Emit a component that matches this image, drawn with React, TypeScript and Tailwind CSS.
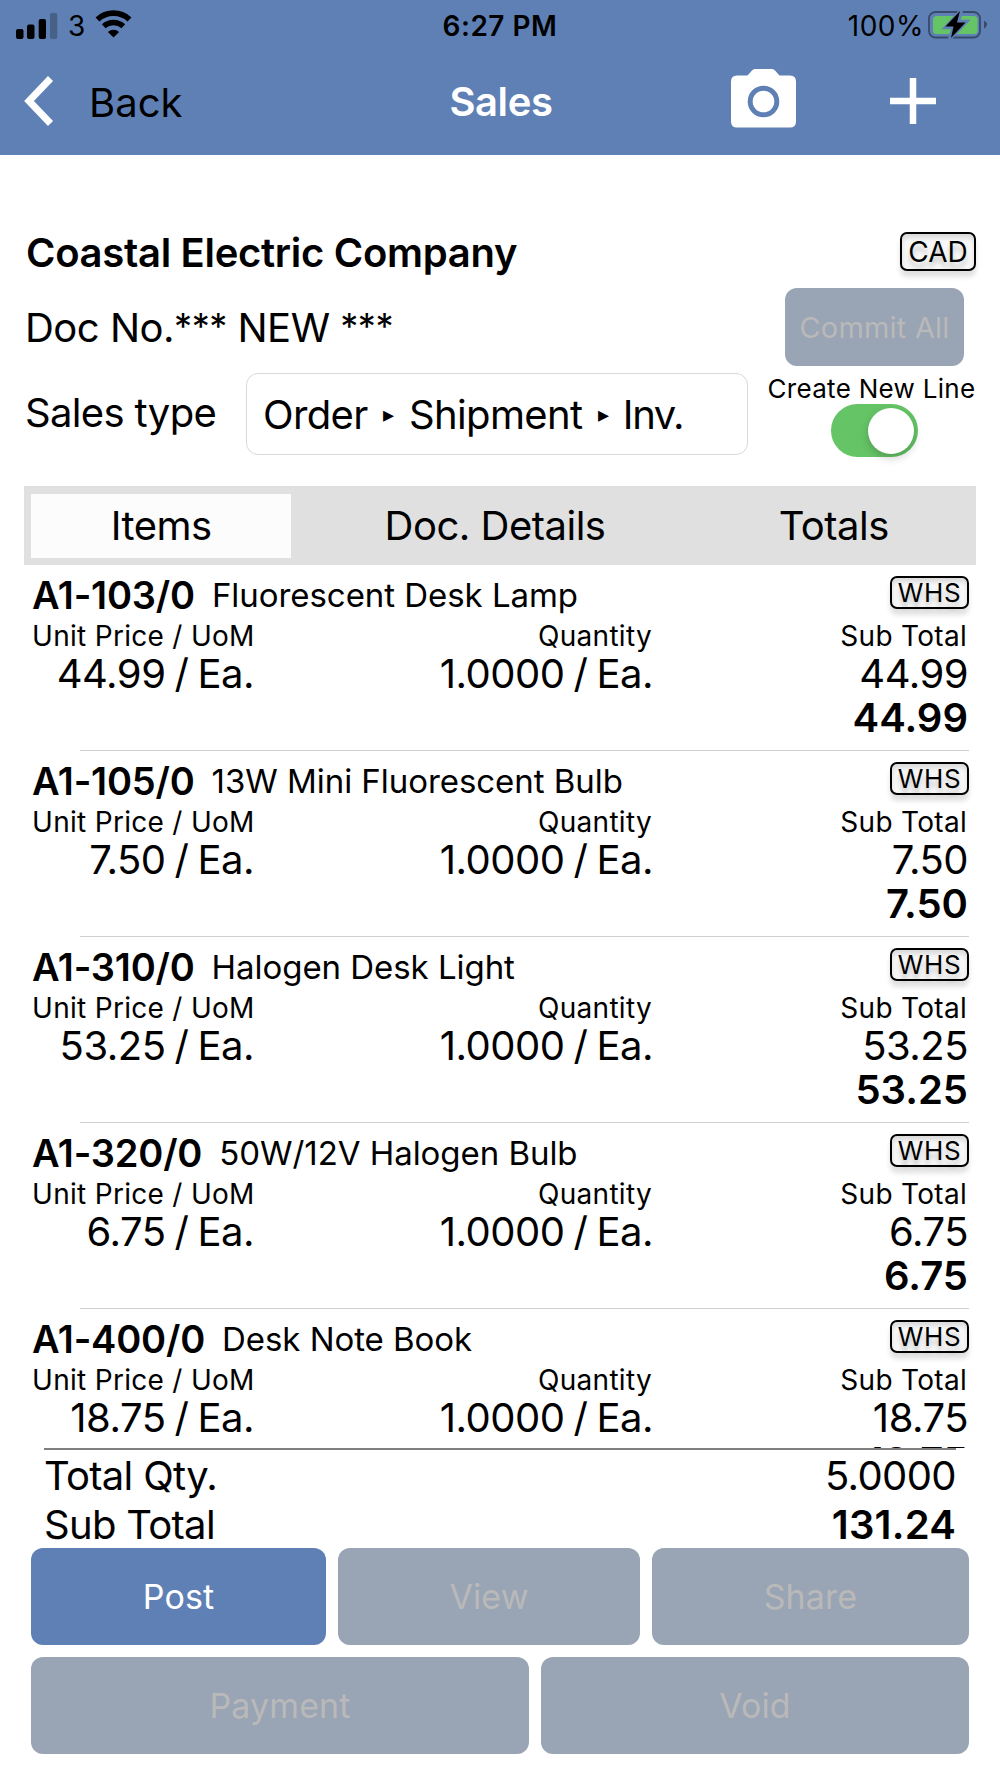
import * as React from 'react';
import clsx from 'clsx';

type SaleLine = {
  code: string;
  name: string;
  price: string;
  qty: string;
};

const lines: SaleLine[] = [
  { code: 'A1-103/0', name: 'Fluorescent Desk Lamp', price: '44.99', qty: '1.0000' },
  { code: 'A1-105/0', name: '13W Mini Fluorescent Bulb', price: '7.50', qty: '1.0000' },
  { code: 'A1-310/0', name: 'Halogen Desk Light', price: '53.25', qty: '1.0000' },
  { code: 'A1-320/0', name: '50W/12V Halogen Bulb', price: '6.75', qty: '1.0000' },
  { code: 'A1-400/0', name: 'Desk Note Book', price: '18.75', qty: '1.0000' },
];

const tabs = ['Items', 'Doc. Details', 'Totals'];

export default function SalesPage() {
  const [tab, setTab] = React.useState('Items');
  const [newLine, setNewLine] = React.useState(true);

  return (
    <div className="flex h-[1778px] w-[1000px] flex-col overflow-hidden bg-white font-['Inter',sans-serif] text-[40px] leading-none whitespace-nowrap text-black">
      <header className="h-[155px] shrink-0 bg-[#5f80b5]">
        <StatusBar />
        <NavBar />
      </header>

      {/* Document header */}
      <section className="mt-[64px] shrink-0 pr-6 pl-6">
        <div className="flex h-[65px] items-center justify-between">
          <h1 className="pt-0.5 pl-0.5 font-semibold tracking-[-0.3px]">Coastal Electric Company</h1>
          <Badge className="h-[39px] w-[76px] text-[28px]">CAD</Badge>
        </div>

        <div className="flex h-[86px] items-center justify-between pr-3">
          <span className="pt-0.5 pl-px tracking-[-0.5px]">
            Doc No.<Stars /> NEW <Stars />
          </span>
          <Button disabled className="h-[78px] w-[179px] text-[29px] tracking-[0.2px]">Commit All</Button>
        </div>

        <div className="flex h-[88px] items-center tracking-[-0.65px]">
          <span className="w-[222px] pb-[3px] pl-px">Sales type</span>
          <div className="flex h-[82px] w-[502px] items-center rounded-xl border border-[#d9d9d9] pt-0.5 pl-4">
            Order <Arrow /> Shipment <Arrow /> <span className="ml-[-1px] tracking-[-1.4px]">Inv.</span>
          </div>
          <div className="ml-auto flex h-full w-[208px] flex-col items-center pt-[3px]">
            <span className="h-[31px] pr-px text-[26px] leading-[31px] tracking-[0.3px]">Create New Line</span>
            <button
              role="switch"
              aria-checked={newLine}
              onClick={() => setNewLine(!newLine)}
              className={clsx(
                'ml-1 flex h-[53px] w-[87px] shrink-0 items-center rounded-full px-[3.5px]',
                newLine ? 'justify-end bg-[#65c466]' : 'bg-[#e0e0e0]',
              )}
            >
              <span className="size-[46px] rounded-full bg-white shadow-[0_4px_10px_rgba(0,0,0,0.2)]" />
            </button>
          </div>
        </div>
      </section>

      {/* Tabs */}
      <nav className="mx-6 mt-[28px] flex h-[79px] shrink-0 items-center bg-[#e0e0e0] px-[7px]">
        {tabs.map((t, i) => (
          <button
            key={t}
            onClick={() => setTab(t)}
            className={clsx(
              'h-[64px] pt-px tracking-[-0.5px]',
              i === 0 ? 'w-[261px]' : i === 1 ? 'w-[408px]' : 'w-[271px]',
              tab === t && 'bg-[#fcfcfc]',
            )}
          >
            {t}
          </button>
        ))}
      </nav>

      {/* Lines */}
      <div className="h-[883px] shrink-0 overflow-hidden">
        {lines.map(l => (
          <LineRow key={l.code} line={l} />
        ))}
      </div>

      {/* Totals */}
      <section className="mx-11 h-[100px] shrink-0 border-t-2 border-[#7d807f]">
        <div className="flex h-[51px] items-center justify-between tracking-[-0.7px]">
          <span>Total Qty.</span>
          <span className="tracking-[-0.6px]">5.0000</span>
        </div>
        <div className="flex h-[47px] items-center justify-between tracking-[-0.7px]">
          <span>Sub Total</span>
          <span className="font-semibold tracking-[0.2px]">131.24</span>
        </div>
      </section>

      <footer className="flex flex-col gap-3 px-[31px] text-[34px] tracking-[0.1px]">
        <div className="flex gap-3">
          <Button className="h-[97px] w-[295px]">Post</Button>
          <Button disabled className="h-[97px] w-[302px]">View</Button>
          <Button disabled className="h-[97px] flex-1">Share</Button>
        </div>
        <div className="flex gap-3">
          <Button disabled className="h-[97px] w-[498px]">Payment</Button>
          <Button disabled className="h-[97px] flex-1">Void</Button>
        </div>
      </footer>
    </div>
  );
}

function LineRow({ line }: { line: SaleLine }) {
  return (
    <div className="h-[186px]">
      <div className="h-[185px] pt-[10px] pr-[31px] pl-8">
        <div className="flex h-[41px] items-center">
          <span className="pb-0.5 text-[38px] font-semibold tracking-[-0.2px]">{line.code}</span>
          <span className="ml-[17px] text-[33px] tracking-[-0.05px]">{line.name}</span>
          <Badge className="mt-px ml-auto h-[33px] w-[79px] self-start text-[26px] tracking-[0.6px]">WHS</Badge>
        </div>
        <div className="flex pr-px text-right">
          <div className="w-[222px]">
            <Label>Unit Price / UoM</Label>
            <Value>{line.price} / Ea.</Value>
          </div>
          <div className="w-[399px]">
            <Label>Quantity</Label>
            <Value>{line.qty} / Ea.</Value>
          </div>
          <div className="flex-1">
            <Label>Sub Total</Label>
            <Value>{line.price}</Value>
            <div className="h-[51px] leading-[51px] font-semibold">{line.price}</div>
          </div>
        </div>
      </div>
      <div className="mr-[31px] ml-20 h-px bg-[#d0d0d2]" />
    </div>
  );
}

function Label({ children }: { children: React.ReactNode }) {
  return <div className="h-10 pr-px text-[28px] leading-10 tracking-[0.3px]">{children}</div>;
}

function Value({ children }: { children: React.ReactNode }) {
  return (
    <div className="h-9 leading-9 tracking-[-0.5px] [word-spacing:-1.7px]">{children}</div>
  );
}

function Stars() {
  return <span className="align-[3px] text-[36px]">***</span>;
}

function Arrow() {
  return <span className="mx-[15.5px] font-['DejaVu_Sans'] text-[22px]">▸</span>;
}

function Badge({ children, className }: { children: React.ReactNode; className?: string }) {
  return (
    <span
      className={clsx(
        'flex items-center justify-center rounded-[7px] border-2 border-black bg-[#f8f8f8] shadow-[0_6px_5px_rgba(0,0,0,0.12),inset_0_4px_5px_rgba(0,0,0,0.12)] [text-shadow:0_6px_5px_rgba(0,0,0,0.2)]',
        className,
      )}
    >
      {children}
    </span>
  );
}

function Button({
  children,
  className,
  disabled,
}: {
  children: React.ReactNode;
  className?: string;
  disabled?: boolean;
}) {
  return (
    <button
      disabled={disabled}
      className={clsx(
        'rounded-xl',
        disabled ? 'bg-[#99a4b4] text-[#b9b9b9]' : 'bg-[#5f80b5] text-white',
        className,
      )}
    >
      {children}
    </button>
  );
}

function StatusBar() {
  return (
    <div className="grid h-[51px] grid-cols-3 items-center text-[28px]">
      <div className="flex items-center pl-4">
        <svg width="42" height="28" viewBox="0 0 42 28">
          <rect x="0" y="17" width="7.5" height="10" rx="2" />
          <rect x="11" y="12.5" width="7.5" height="14.5" rx="2" />
          <rect x="22.7" y="7" width="7.3" height="20" rx="2" />
          <rect x="34" y="1" width="7.3" height="26" rx="2" fillOpacity="0.25" />
        </svg>
        <span className="ml-2.5">3</span>
        <svg className="mt-[-4px] ml-2.5 shrink-0" width="38" height="28" viewBox="0 0 38 28" fill="none" stroke="#000">
          <path d="M2.5 9.5a23.5 23.5 0 0 1 32 0" strokeWidth="5.8" />
          <path d="M8.7 16.2a14.5 14.5 0 0 1 19.6 0" strokeWidth="5.5" />
          <path d="M18.5 27.5l-5.6-5.6a8.5 8.5 0 0 1 11.2 0z" fill="#000" stroke="none" />
        </svg>
      </div>
      <div className="text-center font-semibold tracking-[0.5px]">6:27 PM</div>
      <div className="flex items-center justify-end pr-3">
        <span className="tracking-[0.5px]">100%</span>
        <svg className="mt-[-2px] ml-1" width="60" height="30" viewBox="0 0 60 30">
          <rect x="1" y="2" width="51" height="25.5" rx="6.5" fill="none" stroke="#000" strokeOpacity="0.42" strokeWidth="1.8" />
          <rect x="5" y="6" width="44.5" height="18" rx="3.5" fill="#65c466" />
          <path d="M56 10.5q3 2 3 4t-3 4z" fillOpacity="0.42" />
          <path d="M33.5 0L17.5 17.5h8L21.5 29L38.5 11.5h-8z" stroke="#5f80b5" strokeWidth="3.5" />
          <path d="M32 1L17.5 16.5h8L23 28L37.5 12.5h-8.5z" />
        </svg>
      </div>
    </div>
  );
}

function NavBar() {
  return (
    <div className="grid h-[102px] grid-cols-3 items-center">
      <div className="flex items-center pl-6">
        <svg className="mt-[-2px]" width="30" height="50" viewBox="0 0 30 50" fill="none" stroke="#fff" strokeWidth="7">
          <path d="M26.5 2.5L5 25l21.500 22.500" />
        </svg>
        <span className="ml-[35px] pt-0.5">Back</span>
      </div>
      <div className="pl-0.5 text-center font-semibold tracking-[-0.4px] text-white">Sales</div>
      <div className="flex items-center justify-end pr-16">
        <svg className="mt-[-8px] mr-[94px]" width="65" height="59" viewBox="0 0 65 59">
          <path
            fill="#fff"
            d="M6 6.500h10.500L21 1.500Q22 0 24 0h17q2 0 3 1.500l4.500 5H59q6 0 6 6v40q0 6-6 6H6q-6 0-6-6v-40q0-6 6-6z"
          />
          <circle cx="32.500" cy="32.500" r="13.300" fill="none" stroke="#5f80b5" strokeWidth="5" />
        </svg>
        <svg className="mt-[-2px]" width="46" height="46" viewBox="0 0 46 46" stroke="#fff" strokeWidth="6.500">
          <path d="M0 23h46M23 0v46" />
        </svg>
      </div>
    </div>
  );
}
